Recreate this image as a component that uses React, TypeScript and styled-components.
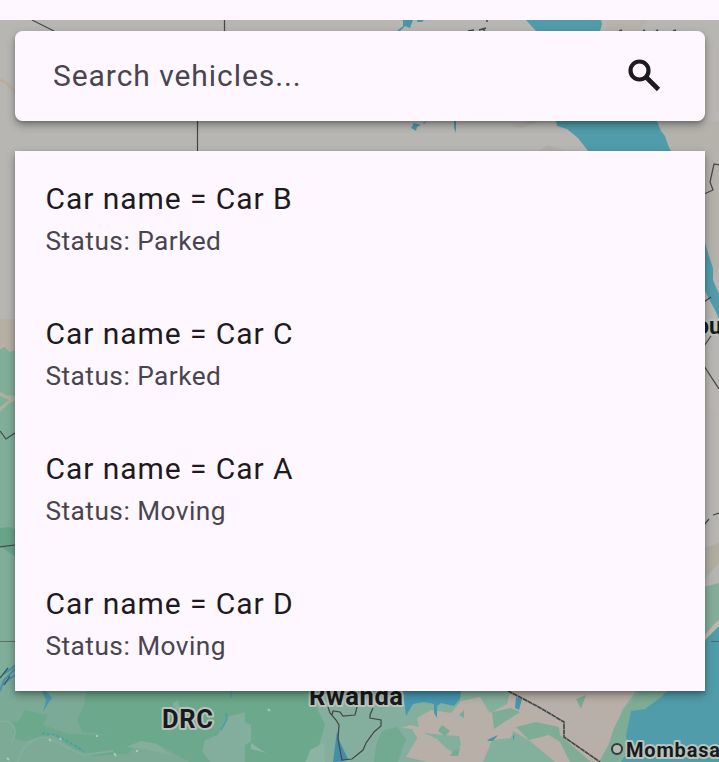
import React from "react";
import styled, { createGlobalStyle } from "styled-components";

const GlobalStyle = createGlobalStyle`
  * { box-sizing: border-box; }
  body { margin: 0; background: #fef7ff; overflow: hidden; }
`;

const Screen = styled.div`
  position: relative;
  display: flex;
  flex-direction: column;
  width: 719px;
  height: 762px;
  overflow: hidden;
  font-family: Roboto, sans-serif;
  background: #b7b6b2;
`;

const MapLayer = styled.svg`
  position: absolute;
  inset: 0;
  width: 100%;
  height: 100%;
`;

const StatusStrip = styled.div`
  position: relative;
  flex: none;
  height: 20px;
  background: #fef7ff;
`;

const Overlay = styled.main`
  position: relative;
  display: flex;
  flex-direction: column;
  gap: 30px;
  padding: 11px 14px 0 15px;
`;

const SearchBar = styled.label`
  display: flex;
  align-items: center;
  justify-content: space-between;
  height: 90px;
  padding: 0 38.5px 0 38px;
  border-radius: 7.5px;
  background: #fef7ff;
  box-shadow: 0 4px 9px rgba(0, 0, 0, 0.32), 0 2px 3px rgba(0, 0, 0, 0.15);
`;

const SearchInput = styled.input`
  width: 480px;
  height: 45px;
  margin-top: -1px;
  padding: 0;
  border: 0;
  outline: 0;
  background: transparent;
  font: 400 30px/45px Roboto, sans-serif;
  letter-spacing: 0.94px;
  color: #1d1b20;
  &::placeholder {
    color: #49454f;
    opacity: 1;
  }
`;

const SearchGlyph = styled.svg`
  width: 45px;
  height: 45px;
  margin-top: -3px;
  fill: none;
  stroke: #1d1b20;
`;

const ResultList = styled.ul`
  margin: 0;
  padding: 0;
  list-style: none;
  background: #fef7ff;
  box-shadow: 0 4px 9px rgba(0, 0, 0, 0.32), 0 2px 3px rgba(0, 0, 0, 0.15);
`;

const ResultRow = styled.li`
  display: flex;
  flex-direction: column;
  gap: 2px;
  height: 135px;
  padding: 25px 30px 0 30.5px;
`;

const VehicleName = styled.span`
  font-size: 30px;
  line-height: 45px;
  letter-spacing: 0.94px;
  color: #1d1b20;
`;

const VehicleStatus = styled.span`
  font-size: 26.25px;
  line-height: 37.5px;
  letter-spacing: 0.47px;
  color: #49454f;
`;

const MapLabel = styled.text`
  font-family: Roboto, sans-serif;
  font-weight: 700;
  fill: #171b1b;
  stroke: #b9c2bc;
  stroke-width: 4px;
  stroke-linejoin: round;
  paint-order: stroke;
`;

const vehicles = [
  { name: "Car B", status: "Parked" },
  { name: "Car C", status: "Parked" },
  { name: "Car A", status: "Moving" },
  { name: "Car D", status: "Moving" },
];

const WATER = "#519caa";
const LAND = "#b8b0a8";

function AfricaMap() {
  return (
    <MapLayer viewBox="0 0 719 762" aria-hidden="true">
      <rect width="719" height="762" fill="#b7b6b2" />
      {/* northern desert */}
      <path d="M0 80 C6 82 10 86 18 95" stroke="#b7ae9f" strokeWidth="3" fill="none" />
      <path d="M0 319 H20 V360 H0Z" fill="#b5afa4" />
      <path d="M608 20H648L638 32H605Z M660 125L719 121V270L690 300Z" fill="#b5b2ac" />
      <path d="M538 151L548 145L565 151Z M510 126L530 121L540 121L522 128Z" fill="#b3afa7" />
      {/* western forest */}
      <path d="M0 349L5 347L9 352L18 350V762H0Z" fill="#7fae99" />
      <path d="M0 392L6 395L16 396V400L8 404L0 412V407L9 400L0 396Z" fill="#aeb09f" />
      <path d="M0 528L10 527L20 533V560L0 546Z" fill="#67a58b" />
      {/* southern forest */}
      <path d="M0 680H430V762H0Z" fill="#6ba88c" />
      <path d="M0 680H88L84 705L77 720L82 732L110 735L68 734L43 725L48 715L25 710L18 722L0 721Z" fill="#7bab97" />
      <path d="M0 722L13 724V738L25 741L52 735L76 750L92 756L128 754L137 742L155 743L172 752L190 762H0Z" fill="#7caa97" />
      <path d="M0 722C14 719 18 730 12 742M48 738C35 735 20 747 18 762M52 740L83 755L113 751" stroke="#84ae9b" strokeWidth="2" fill="none" />
      <path d="M205 740L218 735L227 717L245 712V762H210L202 751Z" fill="#83ad9c" />
      <path d="M240 720L251 725V741L240 749Z M305 762L319 745L325 725L309 691H434L420 762Z" fill="#84af9e" />
      <path d="M126 747L141 741L157 744L170 755L145 749Z M178 700L181 715L172 704Z" fill="#84b09b" />
      <path d="M376 745L382 731L397 727L406 739L398 762H374Z" fill="#71aa91" />
      <path d="M251 743L266 753L251 749Z M310 750L324 743L325 762H306Z" fill="#8cb4a3" />
      {/* rivers */}
      <path d="M0 691L4 680L15 669M4 674L16 665M3 684L15 675" stroke="#4b91a9" strokeWidth="2" fill="none" />
      <path d="M0 678L8 668M4 685L10 676" stroke="#315969" strokeWidth="1.3" fill="none" />
      <path d="M42 691L46 700L43 712L49 702L52 698L46 691Z" fill="#4c9aae" />
      <path d="M42 733L56 735L67 741L84 751" stroke="#4a9ba6" strokeWidth="1.5" strokeDasharray="3 2" fill="none" />
      <path d="M231 691V698M226 713L227 719L221 730" stroke="#4c9ba9" strokeWidth="1.5" fill="none" />
      <path d="M49 739L51 741M60 738L61 740M97 735V737M114 753L116 756M137 750V752M268 709L270 711M7 758L9 760" stroke="#acc8b6" strokeWidth="2" fill="none" />
      {/* savanna east of the lake */}
      <path d="M420 691H674L650 720L633 762H420Z" fill="#83af9d" />
      <path d="M510 691H636L622 710L617 731L608 762H555L530 741L513 731L511 738L492 740L483 762H452L461 745L459 736L443 735L425 733L418 739L412 729L402 728L410 725L419 727L417 718L431 710L451 713L461 701L480 697L490 713L507 704Z" fill={LAND} />
      <path d="M418 737L406 757L428 762H470L446 748L437 739L424 733Z" fill={LAND} />
      <path d="M492 712L511 708L520 712L506 721L494 729Z M516 727L536 722L559 727L560 735L576 749L591 762H570L560 742L549 735L529 740Z" fill="#7eac94" />
      <path d="M442 725L450 731L445 736L438 731Z M453 751L460 748L458 756L450 756Z M576 699L586 695L581 709Z M459 715L464 710L464 718Z" fill="#79aa94" />
      <path d="M535 691L577 704L590 719L604 713L592 735L571 734L560 723L528 711Z" fill="#b5afaa" opacity=".65" />
      <path d="M641 691L622 712L614 728L609 744L599 762H618L629 735L632 713L654 705L674 691Z" fill="#7dac97" />
      {/* lakes */}
      <path d="M403 691H461L460 699L454 706L441 703L437 706V718L434 713V704L424 702L413 704L406 716Z" fill="#4797b1" />
      <path d="M337 731L340 742L348 759L341 762H333Z" fill="#448eac" />
      <path d="M516 697L522 699L519 710L515 708Z M489 739L498 735L493 741L487 741Z M513 736L515 735L513 741Z" fill="#4896aa" />
      {/* Red Sea */}
      <path d="M526 20H601L602 24L600 31H536Z M556 121H657L661 131L665 136L668 145L671 151H588L578 138L567 129L557 126Z" fill={WATER} />
      <path d="M403 20H413L410 28L405 26L400 31H397L403 26Z M417 20H424L422 22H417Z M411 128L414 123L421 125L417 127L416 131L413 129Z M454 121H456V133L454 128Z M423 123L427 121L424 124Z" fill="#4796a8" />
      {/* Gulf of Aden */}
      <path d="M704 239L709 256L713 268L713 280L719 294V319L716 312L709 299L704 289Z" fill={WATER} />
      {/* Horn and Indian Ocean */}
      <path d="M704 410H719V589L704 600Z" fill="#b7b5b2" />
      <path d="M704 548L719 543V563L704 580Z" fill="#b0ad9f" />
      <path d="M704 587L719 583V625L704 637Z" fill="#83ad99" />
      <path d="M704 636L719 622V762H621L629 750L626 736L631 711L645 709L660 698L675 684H704Z" fill={WATER} />
      <path d="M704 636L719 619V626L704 641Z" fill="#bbb9ab" />
      {/* borders */}
      <g fill="none" stroke="#454946" strokeWidth="1.25">
        <path d="M32 20L54 31M224.5 20V31M197.500 121V151" />
        <path d="M468 31L474 30M479 30L486 28M483 29L485 31M487 20V22M619 31L622 30M643 31L645 30M656 31L658 30M673 31L676 30" strokeWidth="1.5" />
        <path d="M0 431L6 439L15 433M0 547L15 545" />
        <path d="M0 641.500H15M711 641.500H719" strokeWidth=".6" />
        <path d="M719 165L714 164L710 182L713 190L704 194M704 302L711 297M704 346L711 336M704 366L719 389M704 525L709 519M713 515L719 513" />
        <path d="M508 691L537 706L564 722V737L600 762" strokeDasharray="5 .5" strokeWidth="1.7" />
        <path d="M328 707L330 713L336 720L339 725L338 739L342 760L352 759L363 750L366 743L374 732L381 726L381 720L370 718L370 715L373 708M332 715L333 711L340 712L343 716L355 715L357 707" />
      </g>
      <MapLabel x="162" y="727.500" fontSize="25.500" textLength="51">DRC</MapLabel>
      <MapLabel x="309" y="704.500" fontSize="25.500" textLength="94">Rwanda</MapLabel>
      <MapLabel x="626" y="757" fontSize="20" textLength="94">Mombasa</MapLabel>
      <MapLabel x="696" y="334" fontSize="23">ou</MapLabel>
      <circle cx="617" cy="749" r="5" fill="#b9b8b2" stroke="#333b3b" strokeWidth="2" />
    </MapLayer>
  );
}

function SearchIcon() {
  return (
    <SearchGlyph viewBox="0 0 45 45" aria-hidden="true">
      <circle cx="17.500" cy="18.500" r="9" strokeWidth="4.200" />
      <path d="M24 25L36.500 37.500" strokeWidth="4.600" />
    </SearchGlyph>
  );
}

export default function App() {
  return (
    <>
      <GlobalStyle />
      <Screen>
        <AfricaMap />
        <StatusStrip />
        <Overlay>
          <SearchBar>
            <SearchInput placeholder="Search vehicles..." />
            <SearchIcon />
          </SearchBar>
          <ResultList>
            {vehicles.map((vehicle) => (
              <ResultRow key={vehicle.name}>
                <VehicleName>Car name = {vehicle.name}</VehicleName>
                <VehicleStatus>Status: {vehicle.status}</VehicleStatus>
              </ResultRow>
            ))}
          </ResultList>
        </Overlay>
      </Screen>
    </>
  );
}
